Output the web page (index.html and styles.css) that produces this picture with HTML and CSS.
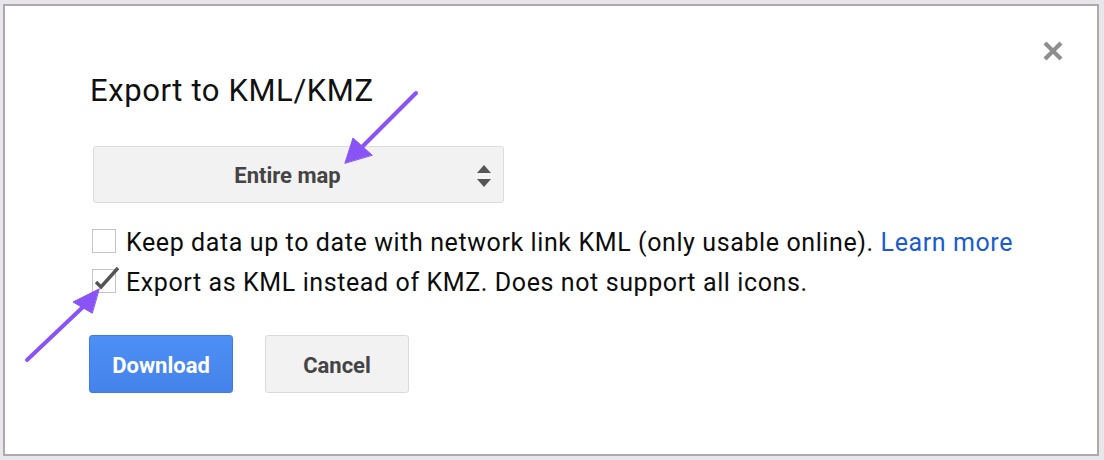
FILE: index.html
```html
<!DOCTYPE html>
<html>
<head>
<meta charset="utf-8">
<link rel="stylesheet" href="styles.css">
</head>
<body>
<div class="dialog">
  <button class="close" aria-label="Close">
    <svg width="22" height="22" viewBox="0 0 22 22"><path d="M3 3 L19 19 M19 3 L3 19" stroke="#8e8e8e" stroke-width="4.2" stroke-linecap="butt"/></svg>
  </button>
  <h1 class="title">Export to KML/KMZ</h1>
  <div class="select">
    <span class="select-label">Entire map</span>
    <svg class="select-arrows" width="16" height="24" viewBox="0 0 16 24"><path d="M1 9 L8 1 L15 9 Z M1 15 L15 15 L8 23 Z" fill="#555"/></svg>
  </div>
  <div class="options">
    <label class="option">
      <span class="box"></span>
      <span class="option-text">Keep data up to date with network link KML (only usable online). <a class="link" href="#">Learn more</a></span>
    </label>
    <label class="option">
      <span class="box checked">
        <svg class="check" width="28" height="28" viewBox="0 0 28 28"><path d="M4 17 L9 22 L26 3" fill="none" stroke="#555" stroke-width="3.4"/></svg>
      </span>
      <span class="option-text">Export as KML instead of KMZ. Does not support all icons.</span>
    </label>
  </div>
  <div class="actions">
    <button class="btn primary">Download</button>
    <button class="btn secondary">Cancel</button>
  </div>
</div>
<svg class="annotations" width="1104" height="460" viewBox="0 0 1104 460">
  <g stroke="#8a53f6" stroke-width="4" stroke-linecap="round" fill="#8a53f6">
    <line x1="416" y1="93" x2="362" y2="147"/>
    <polygon points="345,163 353,138 372,155" stroke-width="1" stroke-linejoin="round"/>
    <line x1="27" y1="360" x2="83" y2="307"/>
    <polygon points="99,289 73,302 92,313" stroke-width="1" stroke-linejoin="round"/>
  </g>
</svg>
</body>
</html>
```
FILE: styles.css
```css
html, body {
  margin: 0;
  padding: 0;
}
body {
  width: 1104px;
  height: 460px;
  background: #e9e6eb;
  font-family: Roboto, "Liberation Sans", Arial, sans-serif;
  position: relative;
  overflow: hidden;
}
.dialog {
  position: relative;
  margin: 4px 0 0 3px;
  width: 1092px;
  height: 448px;
  border: 2px solid #ababab;
  background: #fff;
  box-sizing: content-box;
  padding: 0;
}
.close {
  position: absolute;
  top: 34px;
  right: 33px;
  width: 22px;
  height: 22px;
  padding: 0;
  border: 0;
  background: none;
  display: block;
}
.close svg { display: block; }
.title {
  margin: 0;
  padding: 67px 0 0 85px;
  font-size: 31px;
  line-height: 35px;
  letter-spacing: 0.6px;
  font-weight: 400;
  color: #111;
}
.select {
  margin: 38px 0 0 88px;
  width: 409px;
  height: 55px;
  border: 1px solid #dcdcdc;
  border-radius: 3px;
  background: #f2f2f2;
  display: flex;
  align-items: center;
  justify-content: center;
  position: relative;
  box-sizing: content-box;
}
.select-label {
  font-size: 22px;
  font-weight: 700;
  color: #444;
  padding-top: 2px;
  padding-right: 22px;
}
.select-arrows {
  position: absolute;
  right: 11px;
  top: 17px;
}
.options {
  margin: 26px 0 0 87px;
  display: flex;
  flex-direction: column;
  gap: 16px;
}
.option {
  display: flex;
  align-items: center;
  gap: 10px;
  height: 24px;
}
.box {
  width: 22px;
  height: 22px;
  border: 1px solid #c4c4c4;
  flex: none;
  position: relative;
  background: #fff;
}
.check {
  position: absolute;
  left: -1px;
  top: -5px;
}
.option-text {
  font-size: 25px;
  line-height: 24px;
  letter-spacing: 0.6px;
  color: #0d0d0d;
  padding-top: 4px;
  white-space: nowrap;
}
.link {
  color: #1a5ccf;
  text-decoration: none;
}
.actions {
  margin: 42px 0 0 84px;
  display: flex;
  gap: 32px;
}
.btn {
  height: 58px;
  border-radius: 3px;
  font-family: Roboto, "Liberation Sans", Arial, sans-serif;
  font-size: 22px;
  font-weight: 700;
  padding: 0;
  padding-top: 2px;
}
.primary {
  width: 144px;
  background: linear-gradient(#4d8ff5, #4583ea);
  border: 1px solid #3b7de8;
  color: #fff;
}
.secondary {
  width: 144px;
  background: #f2f2f2;
  border: 1px solid #dadada;
  color: #444;
}
.annotations {
  position: absolute;
  top: 0;
  left: 0;
  pointer-events: none;
}
```
